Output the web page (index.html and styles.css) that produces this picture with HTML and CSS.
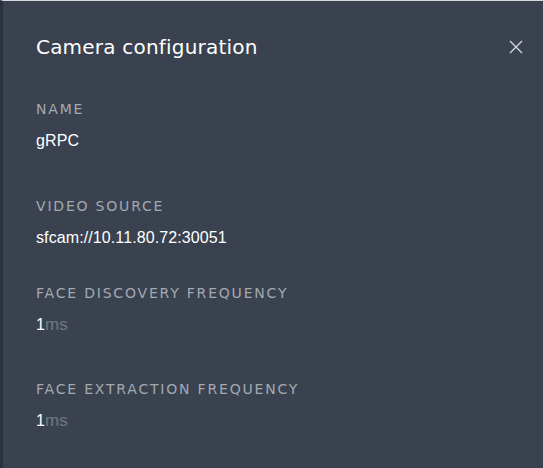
FILE: index.html
```html
<!DOCTYPE html>
<html>
<head>
<meta charset="utf-8">
<link rel="stylesheet" href="styles.css">
</head>
<body>
<div class="panel">
  <div class="header">
    <h1 class="title">Camera configuration</h1>
    <button class="close" aria-label="Close">
      <svg width="14" height="14" viewBox="0 0 14 14"><path d="M1 1 L13 13 M13 1 L1 13" stroke="#d5d9de" stroke-width="1.3" fill="none"/></svg>
    </button>
  </div>
  <div class="fields">
    <div class="field f-name">
      <div class="label">Name</div>
      <div class="value">gRPC</div>
    </div>
    <div class="field f-source">
      <div class="label">Video source</div>
      <div class="value">sfcam://10.11.80.72:30051</div>
    </div>
    <div class="field f-disc">
      <div class="label">Face discovery frequency</div>
      <div class="value"><span class="num">1</span><span class="unit">ms</span></div>
    </div>
    <div class="field f-extr">
      <div class="label">Face extraction frequency</div>
      <div class="value"><span class="num">1</span><span class="unit">ms</span></div>
    </div>
  </div>
</div>
</body>
</html>
```
FILE: styles.css
```css
html, body {
  margin: 0;
  padding: 0;
  height: 100%;
  background: #3a4250;
}
body {
  font-family: "DejaVu Sans", sans-serif;
  color: #ffffff;
}
.panel {
  box-sizing: border-box;
  height: 100%;
  border-top: 1px solid #d6d8db;
  border-left: 3px solid #2c323b;
  background: #3a4250;
  padding: 0 0 0 33px;
}
.header {
  display: flex;
  align-items: center;
  justify-content: space-between;
  padding: 33px 20px 0 0;
  height: 26px;
}
.title {
  margin: 0;
  font-size: 20px;
  font-weight: 400;
  line-height: 26px;
  letter-spacing: 0.2px;
  color: #ffffff;
}
.close {
  background: none;
  border: 0;
  padding: 0;
  width: 14px;
  height: 14px;
  display: flex;
  cursor: pointer;
}
.fields {
  display: flex;
  flex-direction: column;
  padding-top: 41px;
}
.field {
  display: flex;
  flex-direction: column;
  gap: 14px;
}
.f-source { margin-top: 47px; }
.f-disc { margin-top: 37px; }
.f-extr { margin-top: 46px; }
.label {
  font-size: 14px;
  line-height: 16px;
  letter-spacing: 1.8px;
  text-transform: uppercase;
  color: #a3a9b1;
}
.value {
  font-family: "Liberation Sans", Arial, sans-serif;
  font-size: 16px;
  line-height: 20px;
  letter-spacing: 0.1px;
  color: #ffffff;
}
.num { color: #ffffff; }
.unit { color: #6f7783; margin-left: 0; font-size: 17px; }
```
